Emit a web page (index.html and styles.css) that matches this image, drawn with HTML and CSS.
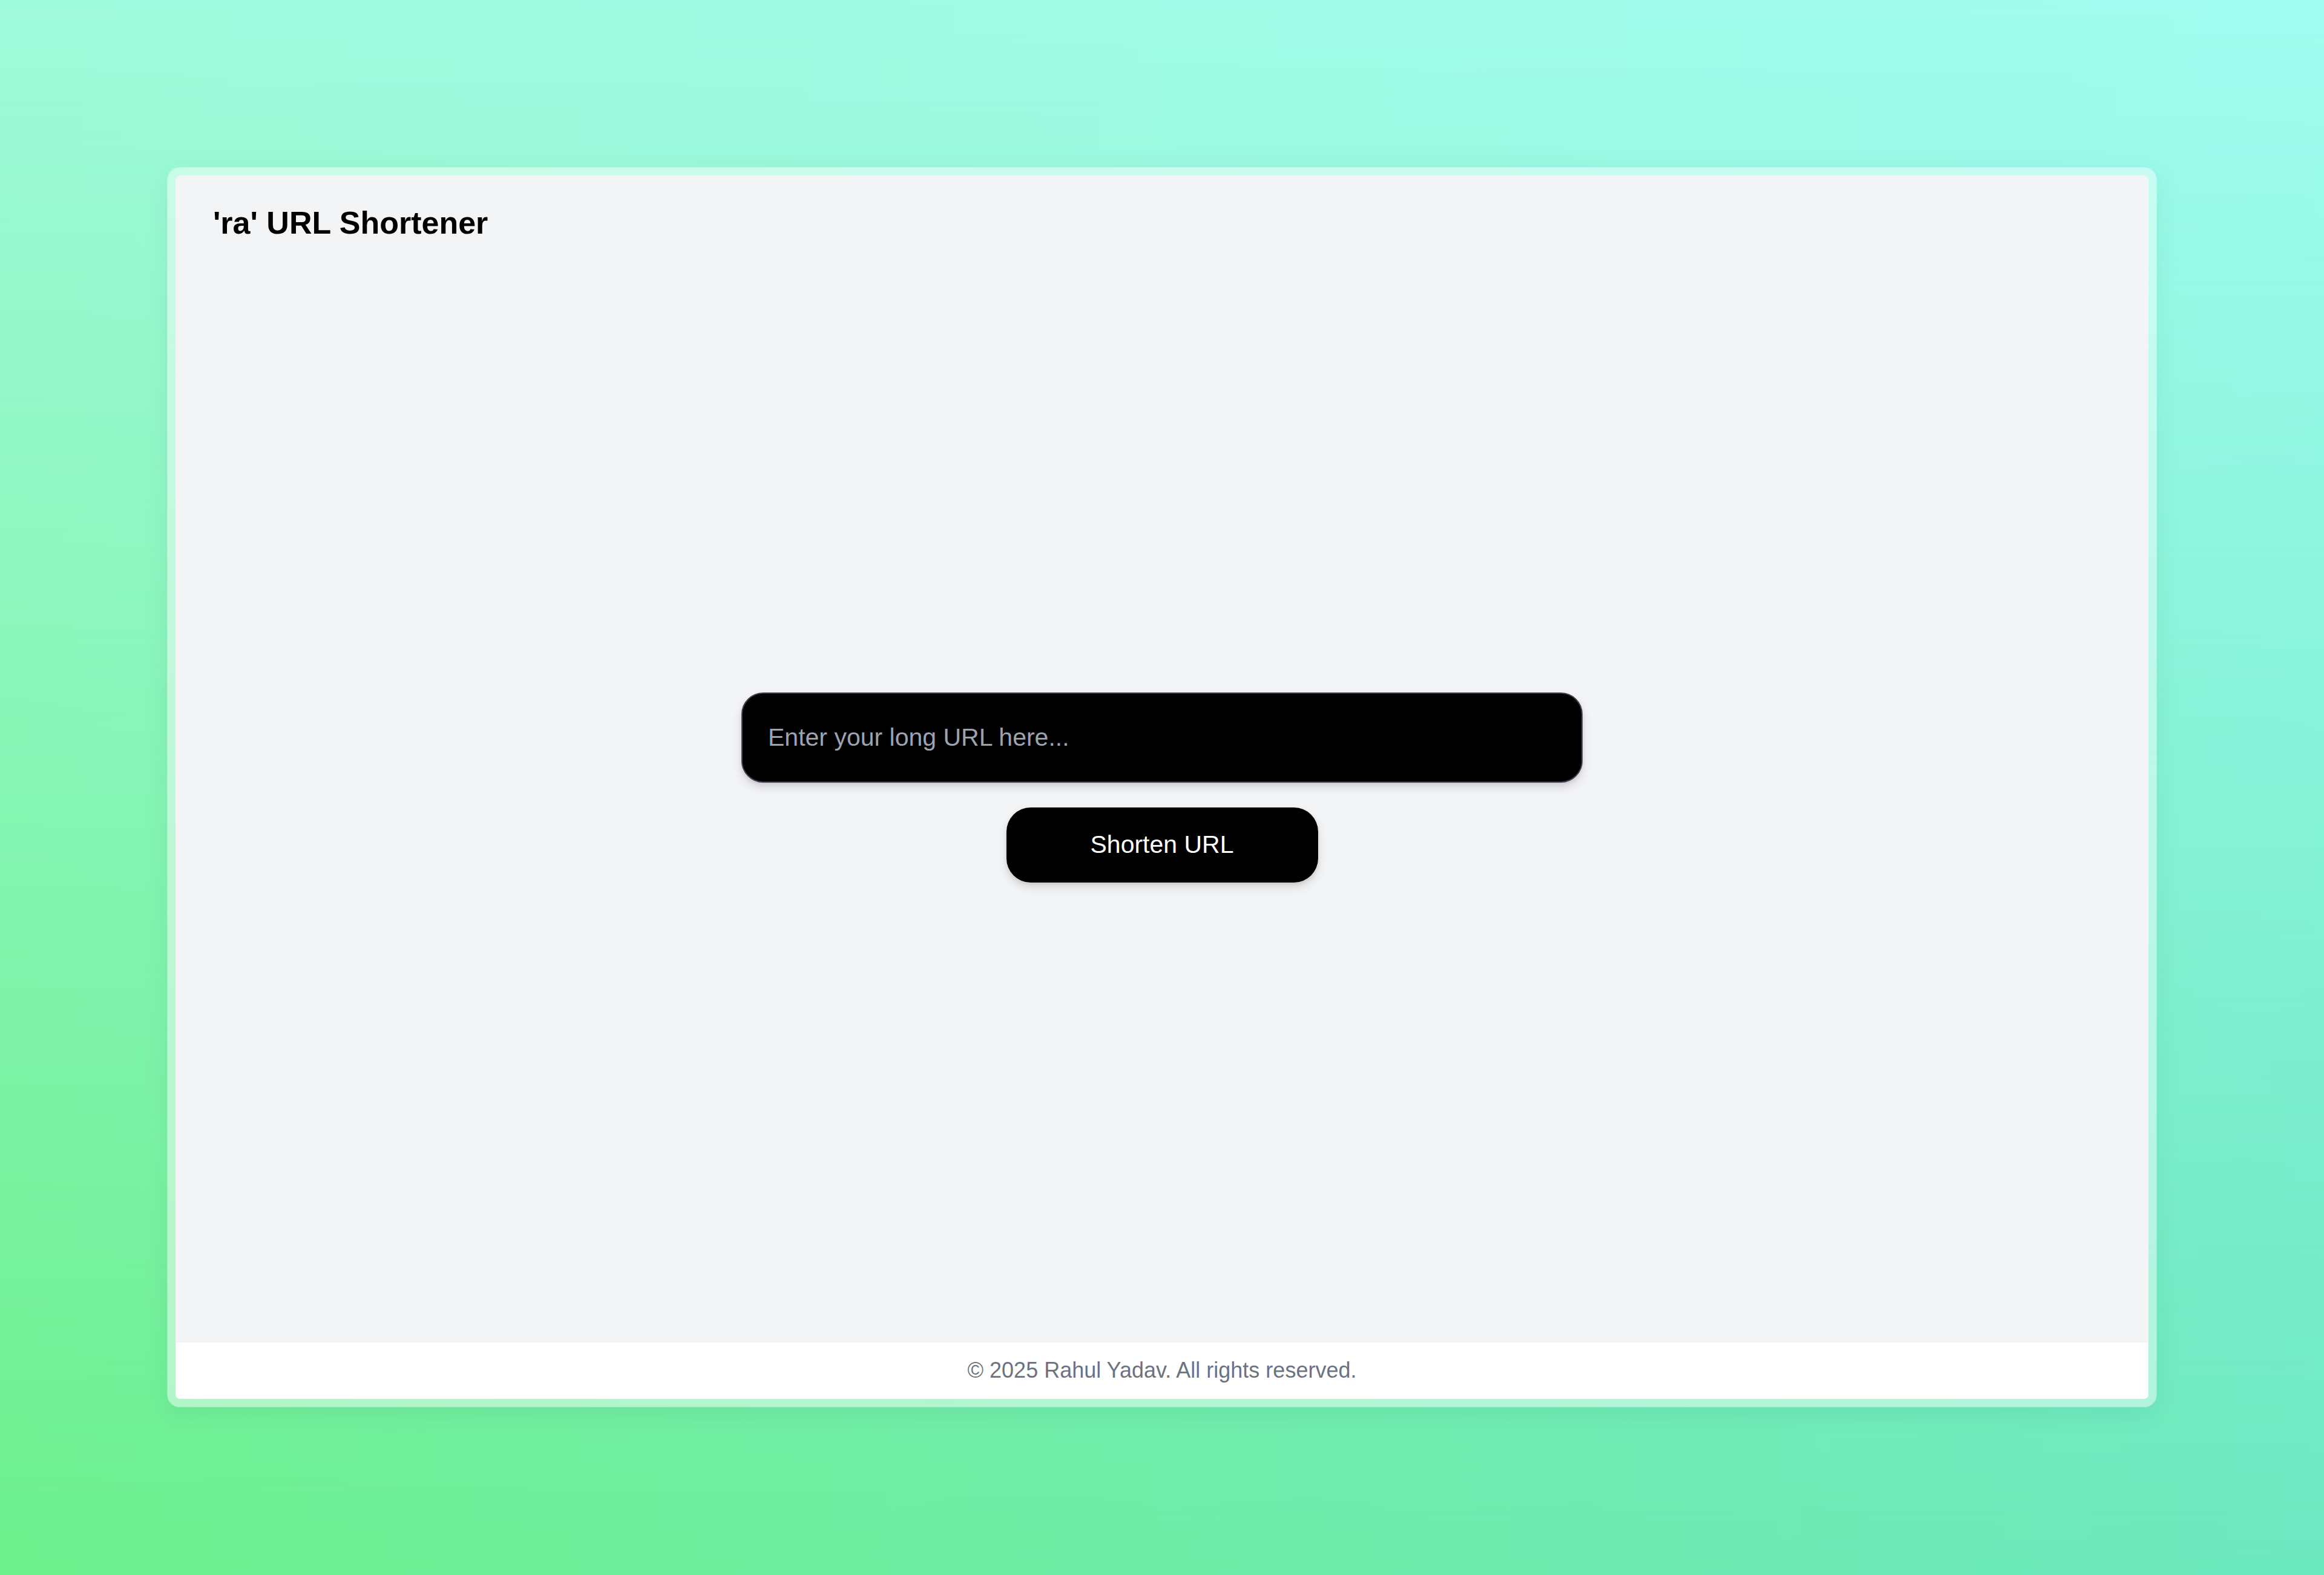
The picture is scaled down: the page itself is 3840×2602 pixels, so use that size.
FILE: index.html
```html
<!DOCTYPE html>
<html lang="en">
<head>
<meta charset="utf-8">
<title>'ra' URL Shortener</title>
<link rel="stylesheet" href="styles.css">
</head>
<body>
<div class="card">
  <header class="header">
    <h1 class="title">'ra' URL Shortener</h1>
  </header>
  <main class="main">
    <form class="form">
      <input class="url-input" type="text" placeholder="Enter your long URL here...">
      <button class="btn" type="button">Shorten URL</button>
    </form>
  </main>
  <footer class="footer">© 2025 Rahul Yadav. All rights reserved.</footer>
</div>
</body>
</html>
```
FILE: styles.css
```css
* { box-sizing: border-box; }
html, body { margin: 0; }
body {
  position: relative;
  width: 3840px;
  height: 2602px;
  padding: 277px;
  font-family: "Liberation Sans", Arial, Helvetica, sans-serif;
  background: linear-gradient(to right, #6cf08c, #6ce8c0);
  overflow: hidden;
}
body::before {
  content: "";
  position: absolute;
  inset: 0;
  background: linear-gradient(to right, #a0fadc, #a0fcf0);
  -webkit-mask-image: linear-gradient(to bottom, #000 0%, rgba(0,0,0,0.55) 45%, transparent 100%);
  mask-image: linear-gradient(to bottom, #000 0%, rgba(0,0,0,0.55) 45%, transparent 100%);
  z-index: 0;
}
.card {
  position: relative;
  z-index: 1;
  height: 2047px;
  display: flex;
  flex-direction: column;
  border: 13px solid rgba(255, 255, 255, 0.45);
  border-radius: 20px;
  background-clip: padding-box;
  box-shadow: 0 0 0 1px rgba(255,255,255,0.35), 0 10px 40px rgba(0, 80, 60, 0.08);
  overflow: hidden;
}
.header {
  background: #f3f4f6;
  padding: 43px 62px 0;
}
.title {
  margin: 0;
  font-size: 52px;
  line-height: 70px;
  font-weight: 700;
  color: #000;
}
.main {
  flex: 1;
  background: #f3f4f6;
  display: flex;
  align-items: center;
  justify-content: center;
  padding-bottom: 20px;
}
.form {
  display: flex;
  flex-direction: column;
  align-items: center;
  gap: 41px;
}
.url-input {
  width: 1390px;
  height: 149px;
  padding: 0 42px;
  background: #000;
  color: #fff;
  border: 2px solid #3f3f4c;
  border-radius: 36px;
  font-family: inherit;
  font-size: 41px;
  outline: none;
  box-shadow: 0 8px 16px rgba(0, 0, 0, 0.12), 0 3px 6px rgba(0, 0, 0, 0.08);
}
.url-input::placeholder { color: #9ca3af; }
.btn {
  width: 515px;
  height: 124px;
  background: #000;
  color: #fff;
  border: none;
  border-radius: 40px;
  font-family: inherit;
  font-size: 41px;
  cursor: pointer;
  box-shadow: 0 8px 16px rgba(0, 0, 0, 0.12), 0 3px 6px rgba(0, 0, 0, 0.08);
}
.footer {
  background: #fff;
  text-align: center;
  color: #6b7280;
  font-size: 36px;
  line-height: 50px;
  padding: 21px 0 22px;
}
```
